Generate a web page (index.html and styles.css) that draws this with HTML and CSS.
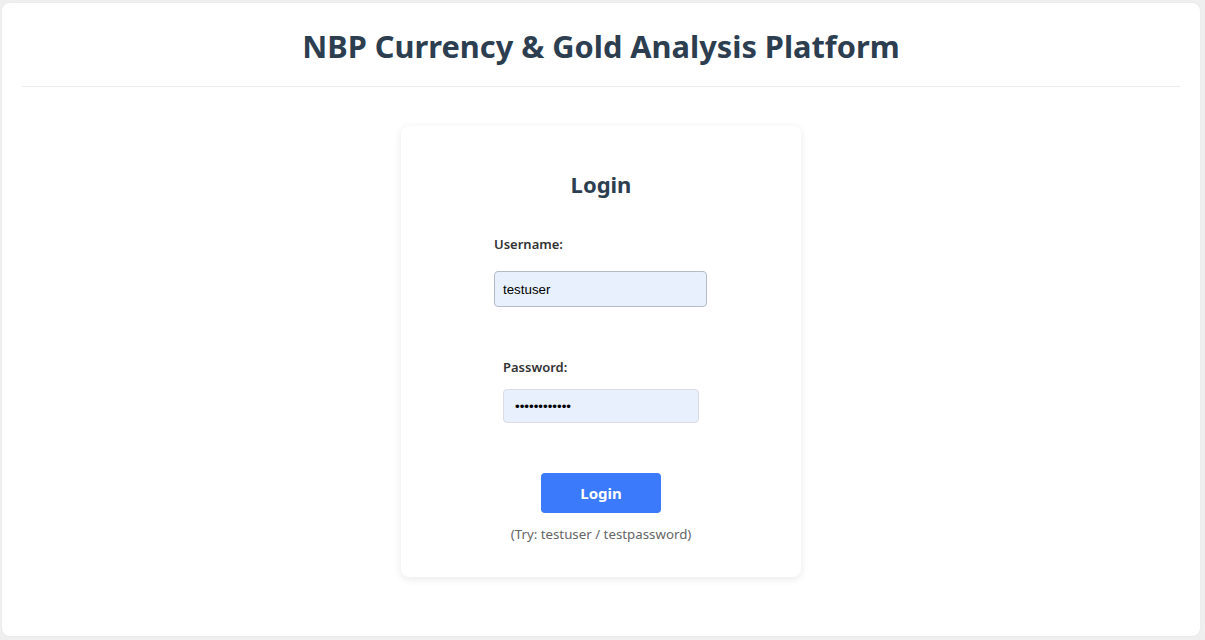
FILE: index.html
```
<!DOCTYPE html>
<html lang="en">
<head>
<meta charset="utf-8">
<title>NBP Currency &amp; Gold Analysis Platform</title>
<link rel="stylesheet" href="styles.css">
</head>
<body>
<div class="app">
  <header class="app-header">
    <h1 class="app-title">NBP Currency &amp; Gold Analysis Platform</h1>
  </header>
  <main class="app-main">
    <section class="login-card">
      <h2 class="login-title">Login</h2>
      <form class="login-form">
        <div class="form-group group-user">
          <label class="form-label" for="username">Username:</label>
          <input class="form-input input-user" id="username" type="text" value="testuser">
        </div>
        <div class="form-group group-pass">
          <label class="form-label" for="password">Password:</label>
          <input class="form-input input-pass" id="password" type="password" value="testpassword">
        </div>
        <button class="login-button" type="button">Login</button>
        <p class="login-hint">(Try: testuser / testpassword)</p>
      </form>
    </section>
  </main>
</div>
</body>
</html>
```

FILE: styles.css
```
* { box-sizing: border-box; }

html, body {
  margin: 0;
  height: 100%;
}

body {
  background: #efefef;
  padding: 3px 5px 4px 2px;
  font-family: "Noto Sans", "Open Sans", sans-serif;
  color: #2c3e50;
}

.app {
  background: #ffffff;
  border-radius: 8px;
  height: 633px;
  padding: 0 20px;
  display: flex;
  flex-direction: column;
  box-shadow: 0 0 3px rgba(0, 0, 0, 0.04);
}

.app-header {
  height: 84px;
  border-bottom: 1px solid #ececec;
  display: flex;
  align-items: center;
  justify-content: center;
  padding-top: 2px;
}

.app-title {
  margin: 0;
  font-size: 30.75px;
  font-weight: 700;
  line-height: 40px;
  color: #2c3e50;
}

.app-main {
  display: flex;
  justify-content: center;
  padding-top: 39px;
}

.login-card {
  width: 400px;
  height: 451px;
  background: #ffffff;
  border-radius: 8px;
  box-shadow: 0 2px 8px rgba(0, 0, 0, 0.09);
  padding: 43px 20px 0;
  display: flex;
  flex-direction: column;
  align-items: center;
}

.login-title {
  margin: 0;
  font-size: 22px;
  line-height: 30px;
  font-weight: 700;
  color: #2c3e50;
}

.login-form {
  display: flex;
  flex-direction: column;
  align-items: center;
}

.form-group {
  display: flex;
  flex-direction: column;
  align-items: flex-start;
}

.group-user { margin-top: 35px; margin-right: 1px; }
.group-pass { margin-top: 50px; }

.form-label {
  font-size: 13px;
  line-height: 20px;
  font-weight: 600;
  color: #333333;
}

.group-user .form-label { margin-bottom: 17px; }
.group-pass .form-label { margin-bottom: 12px; }

.form-input {
  font-family: "Liberation Sans", Arial, sans-serif;
  font-size: 13.33px;
  color: #000000;
  background: #e8f0fe;
  border-radius: 4px;
  padding: 0 8px;
  margin: 0;
  outline: none;
}

.input-user {
  width: 213px;
  height: 36px;
  border: 1px solid #b5bbc4;
}

.input-pass {
  width: 196px;
  height: 34px;
  border: 1px solid #d9dde3;
  padding-left: 11px;
}

.login-button {
  margin-top: 50px;
  width: 120px;
  height: 40px;
  border: none;
  border-radius: 4px;
  background: #3b7bfb;
  color: #ffffff;
  font-family: "Noto Sans", "Open Sans", sans-serif;
  font-size: 15px;
  font-weight: 700;
  cursor: pointer;
}

.login-hint {
  margin: 11px 0 0;
  font-size: 13.3px;
  line-height: 20px;
  color: #666666;
}
```
